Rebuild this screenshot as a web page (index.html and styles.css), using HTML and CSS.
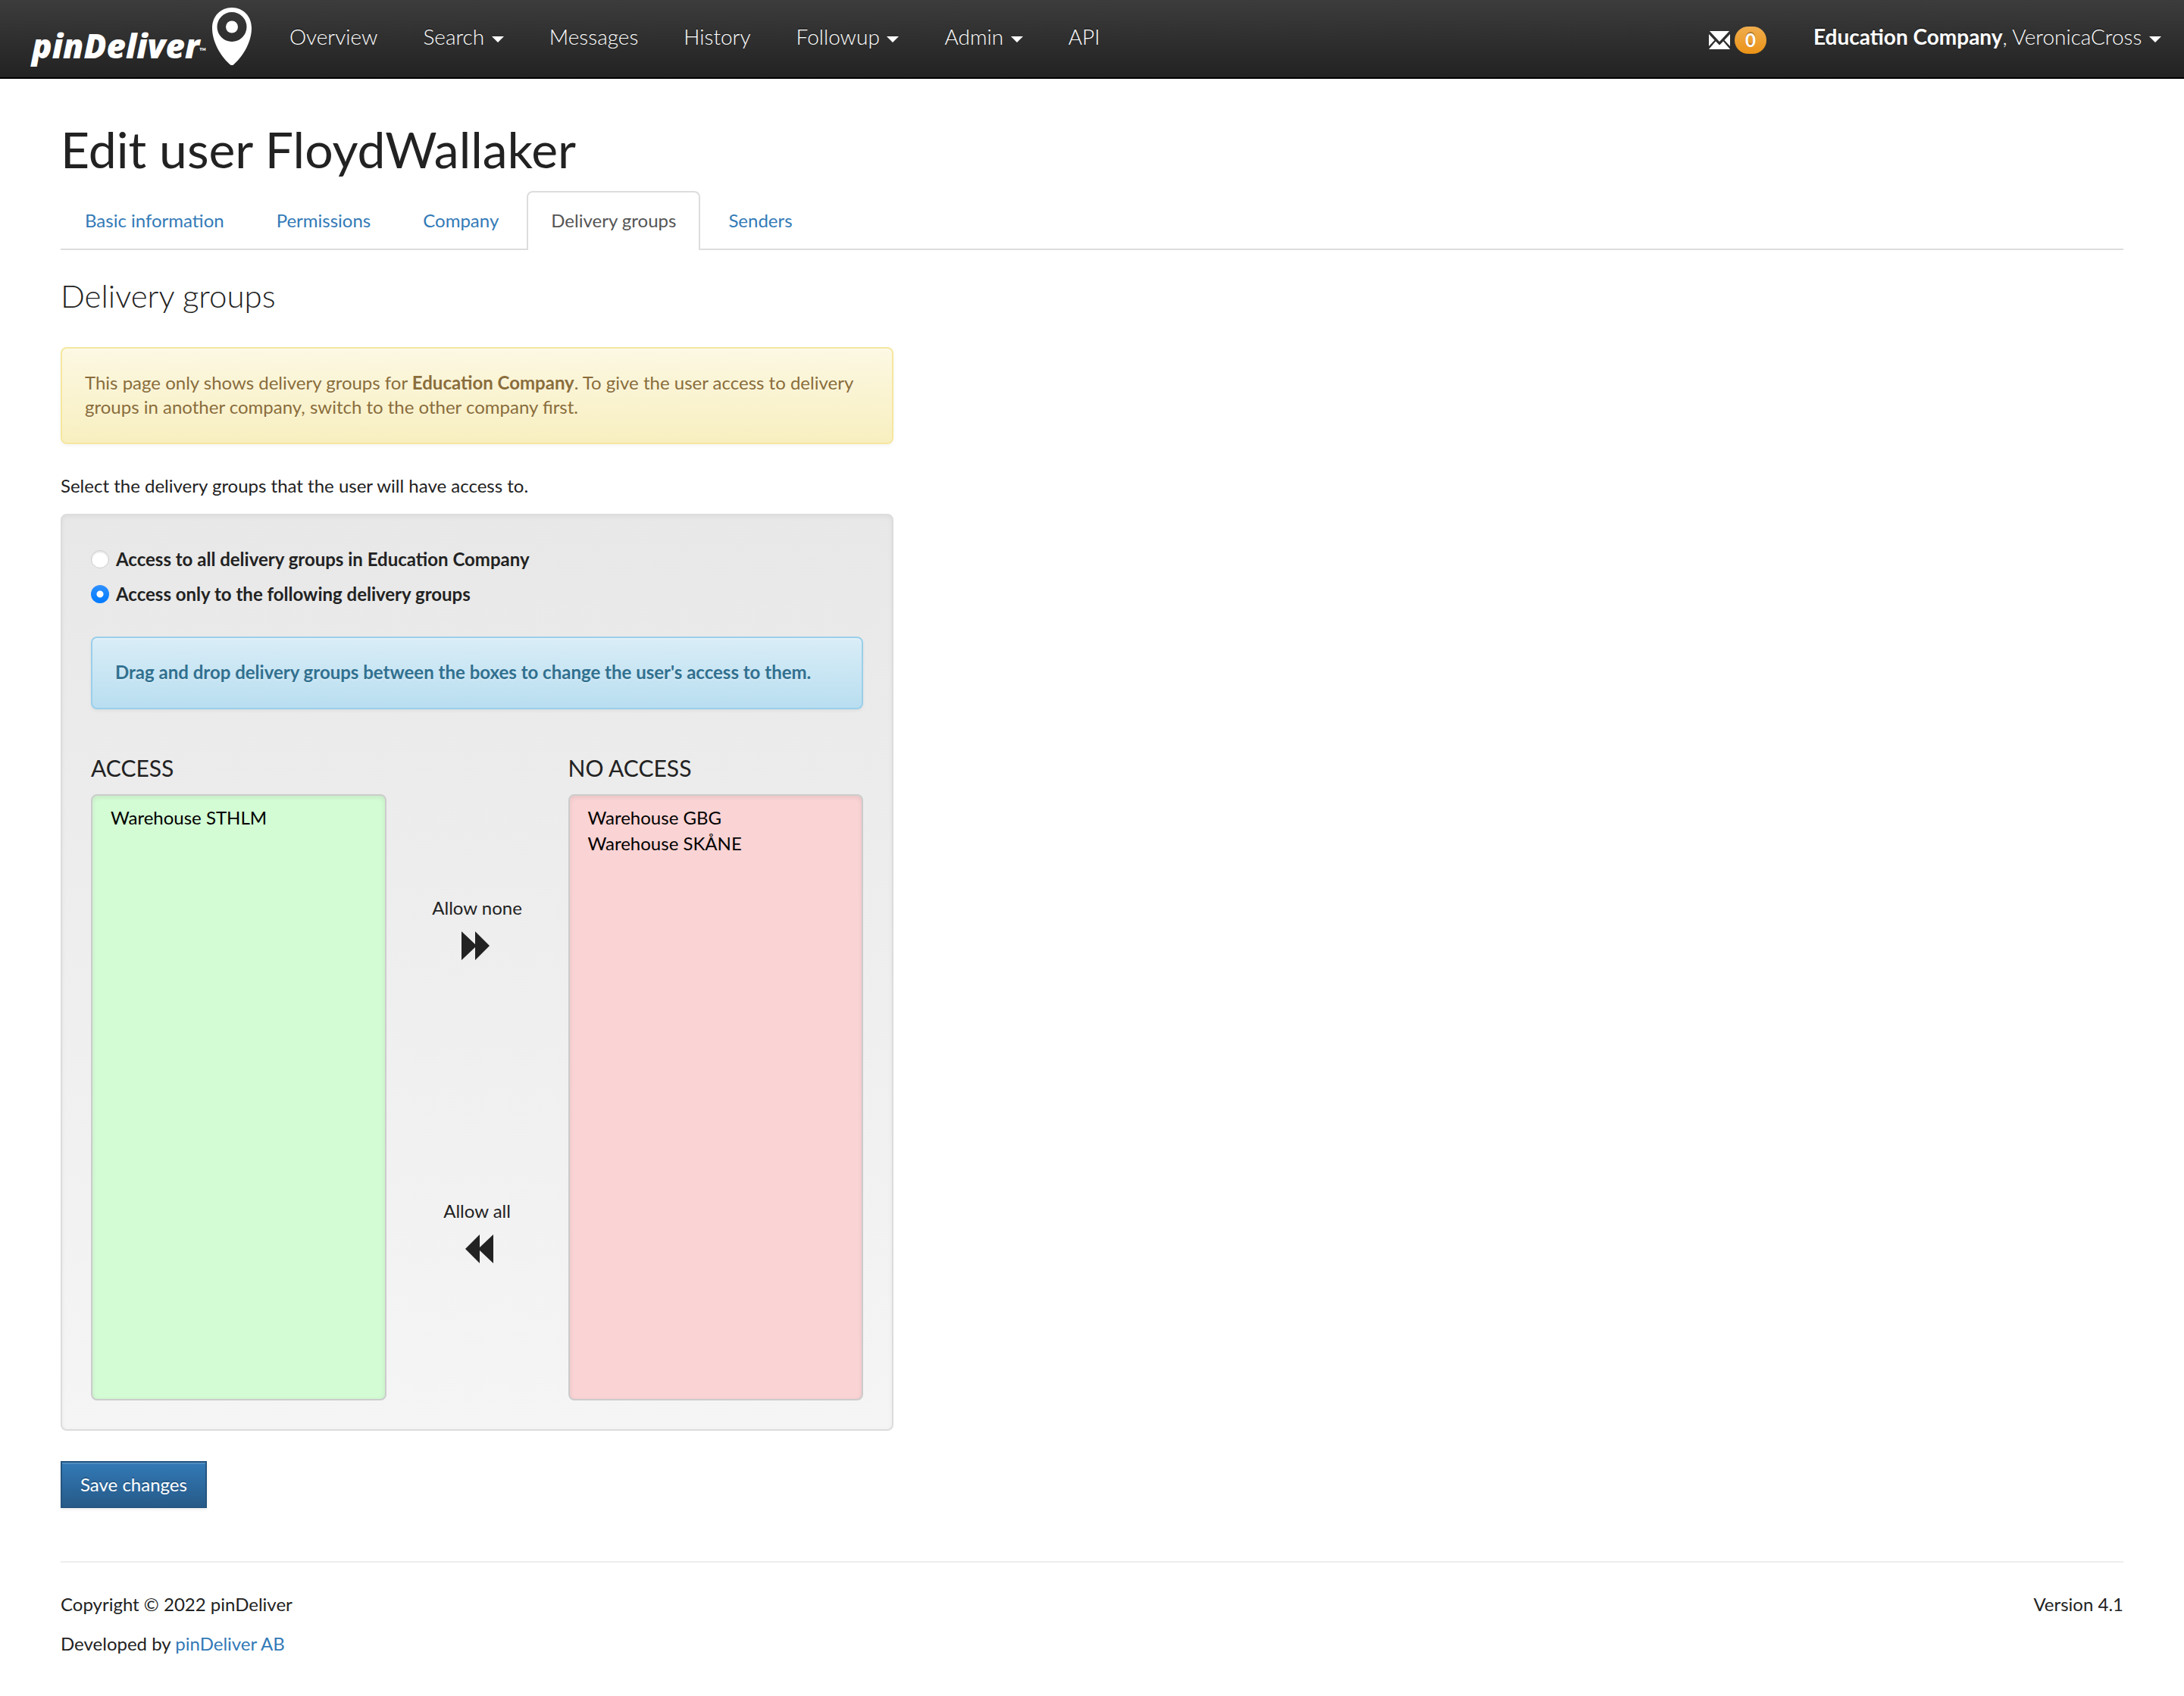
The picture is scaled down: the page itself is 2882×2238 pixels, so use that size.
FILE: index.html
```html
<!DOCTYPE html>
<html lang="en">
<head>
  <meta charset="utf-8">
  <meta name="viewport" content="width=device-width, initial-scale=1">
  <title>Edit user FloydWallaker - pinDeliver</title>
  <link rel="stylesheet" href="styles.css">
</head>
<body>
  <header class="navbar">
    <a class="brand" href="#" aria-label="pinDeliver">
      <span class="brand-name">pinDeliver</span><span class="brand-tm">™</span>
      <svg class="brand-pin" viewBox="0 0 52 76" width="52" height="76" aria-hidden="true">
        <path fill="#fff" fill-rule="evenodd" d="M26 0C11 0 0 11.500 0 27C0 48 14 67 24 75.500Q26 77 28 75.500C38 67 52 48 52 27C52 11.500 41 0 26 0ZM26 6A19.500 19.500 0 0 1 26 45A19.500 19.500 0 0 1 26 6Z"/>
        <circle cx="26" cy="25.500" r="8" fill="#fff"/>
      </svg>
    </a>
    <nav class="nav" aria-label="Main">
      <a class="nav-link" href="#">Overview</a>
      <a class="nav-link" href="#">Search <span class="caret"></span></a>
      <a class="nav-link" href="#">Messages</a>
      <a class="nav-link" href="#">History</a>
      <a class="nav-link" href="#">Followup <span class="caret"></span></a>
      <a class="nav-link" href="#">Admin <span class="caret"></span></a>
      <a class="nav-link" href="#">API</a>
    </nav>
    <div class="nav nav-right">
      <a class="inbox" href="#" aria-label="Inbox">
        <svg class="envelope" viewBox="0 0 28 24" width="28" height="24" aria-hidden="true">
          <path fill="#fff" d="M1 0H27L14 14ZM0 4L7.500 12L0 20ZM28 4V20L20.500 12ZM9 13.500L14 18.500L19 13.500L28 24H0Z"/>
        </svg>
        <span class="badge">0</span>
      </a>
      <a class="nav-link" href="#"><strong>Education Company</strong>, VeronicaCross <span class="caret"></span></a>
    </div>
  </header>

  <div class="page">
    <main>
      <h1 class="title">Edit user FloydWallaker</h1>
      <nav class="tabs" aria-label="User settings">
        <a class="tab" href="#">Basic information</a>
        <a class="tab" href="#">Permissions</a>
        <a class="tab" href="#">Company</a>
        <a class="tab tab-active" href="#" aria-current="page">Delivery groups</a>
        <a class="tab" href="#">Senders</a>
      </nav>

      <form class="col-5">
        <h2 class="subtitle">Delivery groups</h2>
        <div class="alert alert-warning">This page only shows delivery groups for <strong>Education Company</strong>. To give the user access to delivery groups in another company, switch to the other company first.</div>
        <p class="intro">Select the delivery groups that the user will have access to.</p>

        <div class="well">
          <div class="radios">
            <label class="radio"><input type="radio" name="access" value="all">Access to all delivery groups in Education Company</label>
            <label class="radio"><input type="radio" name="access" value="selected" checked>Access only to the following delivery groups</label>
          </div>
          <div class="alert alert-info">Drag and drop delivery groups between the boxes to change the user's access to them.</div>

          <div class="transfer">
            <section class="col-5">
              <h3 class="list-title">ACCESS</h3>
              <ul class="list list-allowed">
                <li>Warehouse STHLM</li>
              </ul>
            </section>
            <div class="moves">
              <button class="move" type="button">
                Allow none
                <svg viewBox="0 0 42 38" width="42" height="38" aria-hidden="true"><path fill="#222" d="M0 0L18 17V0L37 19L18 38V21L0 38Z"/></svg>
              </button>
              <button class="move" type="button">
                Allow all
                <svg viewBox="0 0 42 38" width="42" height="38" aria-hidden="true"><path fill="#222" d="M42 0L24 17V0L5 19L24 38V21L42 38Z"/></svg>
              </button>
            </div>
            <section class="col-5">
              <h3 class="list-title">NO ACCESS</h3>
              <ul class="list list-denied">
                <li>Warehouse GBG</li>
                <li>Warehouse SKÅNE</li>
              </ul>
            </section>
          </div>
        </div>

        <button class="save" type="submit">Save changes</button>
      </form>
    </main>

    <footer class="footer">
      <div>
        <p>Copyright © 2022 pinDeliver</p>
        <p>Developed by <a href="#">pinDeliver AB</a></p>
      </div>
      <p>Version 4.1</p>
    </footer>
  </div>
</body>
</html>
```

FILE: styles.css
```css
* {
  box-sizing: border-box;
}

body {
  margin: 0;
  background: #fff;
  color: #222;
  font: 24px/32px Lato, sans-serif;
}

a {
  color: #337ab7;
  text-decoration: none;
}

p,
h1,
h2,
h3,
ul {
  margin: 0;
}

button {
  font: inherit;
}

svg {
  flex-shrink: 0;
}

/* Top bar */
.navbar {
  display: flex;
  height: 104px;
  border-bottom: 2px solid #000;
  background: linear-gradient(#3c3c3c, #222);
}

.brand {
  display: flex;
  align-items: flex-start;
  width: 352px;
  padding: 10px 20px 0 42px;
  color: #fff;
}

.brand-name {
  padding-top: 22px;
  font-family: "Open Sans", sans-serif;
  font-size: 44px;
  font-style: italic;
  font-weight: 800;
  line-height: 56px;
}

.brand-tm {
  padding-top: 48px;
  font-size: 12px;
  font-weight: 700;
  line-height: 20px;
}

.brand-pin {
  margin-left: auto;
}

.nav {
  display: flex;
}

.nav-right {
  margin-left: auto;
}

.nav-link {
  padding: 28px 30px;
  color: #fff;
  font-size: 28px;
  font-weight: 300;
  line-height: 40px;
  text-shadow: 0 -2px 0 rgba(0, 0, 0, 0.25);
  white-space: nowrap;
}

.nav-link strong {
  font-weight: 700;
}

.caret {
  display: inline-block;
  margin-left: 2px;
  border: 8px solid transparent;
  border-top-color: #fff;
  border-bottom: 0;
  vertical-align: middle;
}

.inbox {
  display: flex;
  align-items: center;
  gap: 6px;
  padding: 4px 32px 0;
}

.badge {
  min-width: 42px;
  border-radius: 20px;
  background: linear-gradient(#f0ad4e, #eb9316);
  color: #fff;
  font-weight: 700;
  line-height: 36px;
  text-align: center;
  text-shadow: 0 -2px 0 rgba(0, 0, 0, 0.25);
}

/* Page */
.page {
  padding: 57px 80px 52px;
}

.title {
  font-size: 66px;
  font-weight: 400;
  line-height: 72px;
}

.tabs {
  display: flex;
  gap: 5px;
  margin-top: 19px;
  border-bottom: 2px solid #ddd;
}

.tab {
  margin-bottom: -2px;
  padding: 21px 30px 23px;
  border: 2px solid transparent;
  border-bottom: 0;
}

.tab-active {
  border-color: #ddd;
  border-radius: 8px 8px 0 0;
  background: #fff;
  color: #555;
}

.col-5 {
  width: calc((100% + 60px) * 5 / 12 - 60px);
}

.subtitle {
  margin: 36px 0 44px;
  font-size: 42px;
  font-weight: 300;
  line-height: 48px;
}

.alert {
  padding: 29px 30px 31px;
  border: 2px solid;
  border-radius: 8px;
  box-shadow: inset 0 2px 0 rgba(255, 255, 255, 0.25), 0 2px 4px rgba(0, 0, 0, 0.05);
  text-shadow: 0 2px 0 rgba(255, 255, 255, 0.2);
}

.alert-warning {
  border-color: #f5e79e;
  background: linear-gradient(#fcf8e3, #f8efc0);
  color: #8a6d3b;
}

.alert-info {
  margin: 40px 0 60px;
  border-color: #9acfea;
  background: linear-gradient(#d9edf7, #b9def0);
  color: #31708f;
  font-weight: 700;
}

.intro {
  margin: 39px 0 21px;
}

.well {
  padding: 38px;
  border: 2px solid #dcdcdc;
  border-radius: 8px;
  background: linear-gradient(#e8e8e8, #f5f5f5);
  box-shadow: inset 0 2px 6px rgba(0, 0, 0, 0.05);
}

.radios {
  display: grid;
  gap: 14px;
  padding-top: 4px;
}

.radio {
  display: flex;
  align-items: center;
  gap: 9px;
  font-weight: 700;
}

.radio input {
  appearance: none;
  width: 24px;
  height: 24px;
  margin: 0;
  border: 1px solid #ccc;
  border-radius: 50%;
  background: #fff;
  box-shadow: inset 0 2px 2px rgba(0, 0, 0, 0.1);
}

.radio input:checked {
  border: 0;
  background: radial-gradient(circle, #fff 4px, transparent 5px), linear-gradient(#2f90ff, #007aff);
  box-shadow: none;
}

/* Delivery group lists */
.transfer {
  display: flex;
  justify-content: space-between;
}

.list-title {
  margin-bottom: 18px;
  font-size: 30px;
  font-weight: 400;
  line-height: 34px;
}

.list {
  min-height: 800px;
  padding: 12px 24px;
  border: 2px solid #ccc;
  border-radius: 8px;
  box-shadow: inset 0 2px 6px rgba(0, 0, 0, 0.08);
  color: #000;
  line-height: 34px;
  list-style: none;
}

.list-allowed {
  background: #d3fbd4;
}

.list-denied {
  background: #fad3d4;
}

.moves {
  display: flex;
  flex-direction: column;
  gap: 315px;
  padding-top: 186px;
}

.move {
  display: flex;
  flex-direction: column;
  align-items: center;
  gap: 15px;
  padding: 0;
  border: 0;
  background: none;
  color: #222;
}

.save {
  display: block;
  margin-top: 40px;
  padding: 13px 24px;
  border: 2px solid #245580;
  background: linear-gradient(#337ab7, #265a88);
  box-shadow: inset 0 2px 0 rgba(255, 255, 255, 0.15), 0 2px 4px rgba(0, 0, 0, 0.08);
  color: #fff;
  text-shadow: 0 -2px 0 rgba(0, 0, 0, 0.2);
}

.footer {
  display: flex;
  justify-content: space-between;
  margin-top: 70px;
  padding-top: 39px;
  border-top: 2px solid #eee;
}

.footer p + p {
  margin-top: 20px;
}
```
